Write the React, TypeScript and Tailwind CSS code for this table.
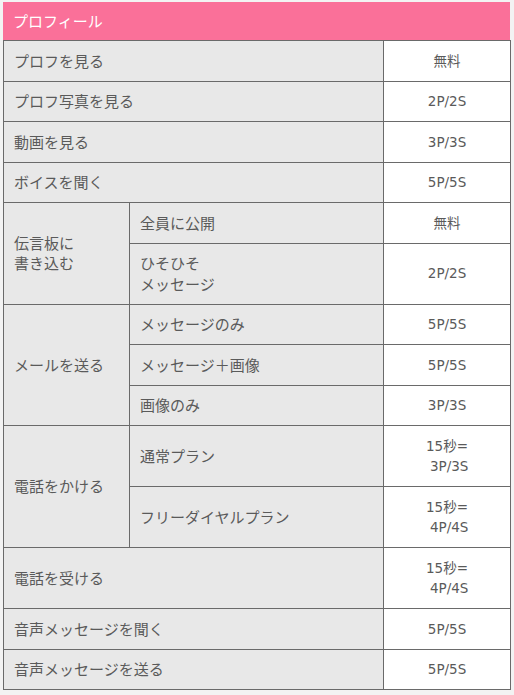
const font = { fontFamily: '"Noto Sans CJK JP", "Noto Sans", sans-serif' }

type Sub = { label: React.ReactNode; price: React.ReactNode }
type Row =
  | { label: React.ReactNode; price: React.ReactNode }
  | { group: React.ReactNode; subs: Sub[] }

const rows: Row[] = [
  { label: 'プロフを見る', price: '無料' },
  { label: 'プロフ写真を見る', price: '2P/2S' },
  { label: '動画を見る', price: '3P/3S' },
  { label: 'ボイスを聞く', price: '5P/5S' },
  {
    group: (
      <>
        伝言板に
        <br />
        書き込む
      </>
    ),
    subs: [
      { label: '全員に公開', price: '無料' },
      {
        label: (
          <>
            ひそひそ
            <br />
            メッセージ
          </>
        ),
        price: '2P/2S',
      },
    ],
  },
  {
    group: 'メールを送る',
    subs: [
      { label: 'メッセージのみ', price: '5P/5S' },
      { label: 'メッセージ＋画像', price: '5P/5S' },
      { label: '画像のみ', price: '3P/3S' },
    ],
  },
  {
    group: '電話をかける',
    subs: [
      {
        label: '通常プラン',
        price: (
          <>
            15秒=
            <br />
            &nbsp;3P/3S
          </>
        ),
      },
      {
        label: 'フリーダイヤルプラン',
        price: (
          <>
            15秒=
            <br />
            &nbsp;4P/4S
          </>
        ),
      },
    ],
  },
  {
    label: '電話を受ける',
    price: (
      <>
        15秒=
        <br />
        &nbsp;4P/4S
      </>
    ),
  },
  { label: '音声メッセージを聞く', price: '5P/5S' },
  { label: '音声メッセージを送る', price: '5P/5S' },
]

const labelCell = 'border border-[#6a6a6a] bg-[#e8e8e8] px-[10px] py-[9.5px] text-left align-middle'
const priceCell =
  'border border-[#6a6a6a] bg-white px-[10px] py-[9.5px] text-center align-middle font-["DejaVu_Sans","Noto_Sans_CJK_JP",sans-serif] text-[13.5px]'

export default function App() {
  return (
    <div className="min-h-screen bg-[#f3f3f3] pt-[2px] pl-[3px]" style={font}>
      <div className="w-[507px]">
        <div className="flex h-[38px] items-center bg-[#fa7099] px-[10px] text-[15px] text-white">
          プロフィール
        </div>
        <table className="w-full table-fixed border-collapse text-[15px] leading-[20.5px] text-[#5a5a5a]">
          <colgroup>
            <col className="w-[126px]" />
            <col className="w-[254px]" />
            <col className="w-[127px]" />
          </colgroup>
          <tbody>
            {rows.map((row, i) =>
              'subs' in row ? (
                row.subs.map((sub, j) => (
                  <tr key={`${i}-${j}`}>
                    {j === 0 && (
                      <td rowSpan={row.subs.length} className={labelCell}>
                        {row.group}
                      </td>
                    )}
                    <td className={labelCell}>{sub.label}</td>
                    <td className={priceCell}>{sub.price}</td>
                  </tr>
                ))
              ) : (
                <tr key={i}>
                  <td colSpan={2} className={labelCell}>
                    {row.label}
                  </td>
                  <td className={priceCell}>{row.price}</td>
                </tr>
              )
            )}
          </tbody>
        </table>
      </div>
    </div>
  )
}
